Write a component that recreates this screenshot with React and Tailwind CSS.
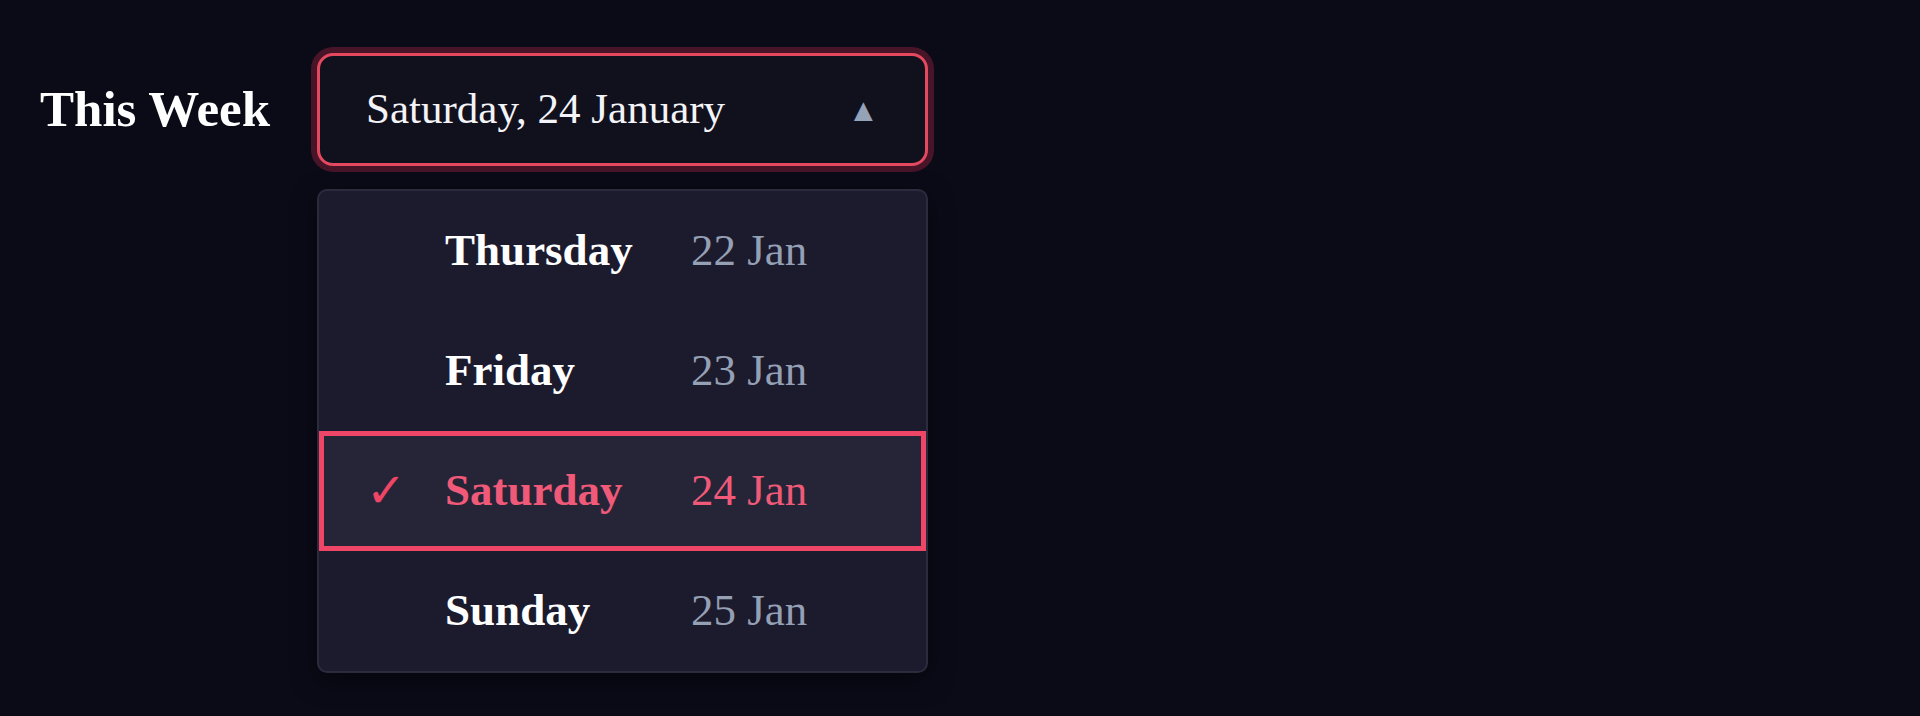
import React, { useState } from "react";

const days = [
  { name: "Thursday", date: "22 Jan", full: "Thursday, 22 January" },
  { name: "Friday", date: "23 Jan", full: "Friday, 23 January" },
  { name: "Saturday", date: "24 Jan", full: "Saturday, 24 January" },
  { name: "Sunday", date: "25 Jan", full: "Sunday, 25 January" },
];

const DayPicker = () => {
  const [selected, setSelected] = useState(2);
  const [open, setOpen] = useState(true);

  return (
    <div className="flex flex-col gap-[23px] w-[611px]">
      {/* Trigger */}
      <button
        type="button"
        onClick={() => setOpen(!open)}
        className="flex items-center justify-between h-[113px] pl-[46px] pr-[46px] bg-[#11111e] border-[3px] border-[#e4495f] rounded-[16px] shadow-[0_0_0_6px_rgba(200,40,75,0.32)] text-left"
      >
        <span className="text-[43px] text-[#f4f4f8]">{days[selected].full}</span>
        <span className="text-[32px] text-[#94a3b8] leading-none">
          {open ? "▲" : "▼"}
        </span>
      </button>

      {/* List */}
      {open && (
        <div className="flex flex-col bg-[#1c1b2e] border-2 border-[#2c2b3e] rounded-[10px] shadow-[0_8px_24px_rgba(0,0,0,0.5)] overflow-hidden">
          {days.map((d, i) => {
            const active = i === selected;
            return (
              <div
                key={d.name}
                onClick={() => setSelected(i)}
                className={
                  active
                    ? "flex items-center h-[120px] pl-[42px] bg-[#262538] border-[5px] border-[#ef4566] cursor-pointer"
                    : "flex items-center h-[120px] pl-[42px] border-[5px] border-transparent cursor-pointer"
                }
              >
                <span className="w-[79px] text-[48px] text-[#ef4566] leading-none">
                  {active ? "✓" : ""}
                </span>
                <span
                  className={
                    active
                      ? "w-[246px] text-[45px] font-bold text-[#f05a78]"
                      : "w-[246px] text-[45px] font-bold text-white"
                  }
                >
                  {d.name}
                </span>
                <span
                  className={
                    active
                      ? "text-[45px] text-[#f05a78]"
                      : "text-[45px] text-[#95a0b4]"
                  }
                >
                  {d.date}
                </span>
              </div>
            );
          })}
        </div>
      )}
    </div>
  );
};

export default function App() {
  return (
    <div className="min-h-screen bg-[#0b0b18] font-['Liberation_Serif',serif] pl-[40px] pt-[53px]">
      <div className="flex items-start gap-[47px]">
        <h2 className="h-[113px] flex items-center text-[51px] font-bold text-white">
          This Week
        </h2>
        <DayPicker />
      </div>
    </div>
  );
}
